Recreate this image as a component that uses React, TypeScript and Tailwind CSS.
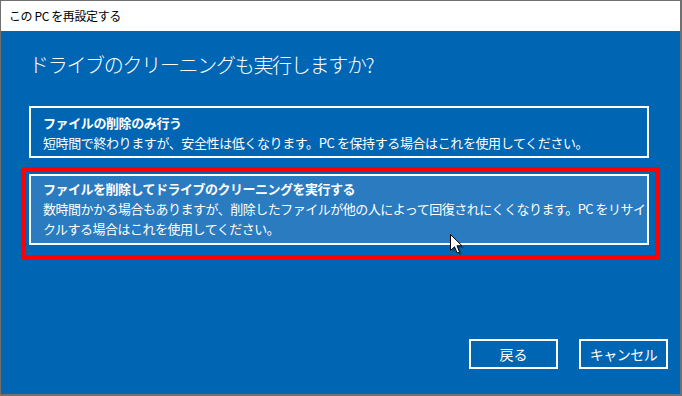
import React from "react";

const font = { fontFamily: '"Noto Sans CJK JP", "Noto Sans", sans-serif' };

export default function App() {
  return (
    <div
      className="relative w-[682px] h-[396px] flex flex-col border-t border-l border-r-2 border-b-2 border-[#707070] bg-[#0066b3] overflow-hidden"
      style={font}
    >
      {/* title bar */}
      <div className="h-[30px] bg-white flex items-center pl-[8px] text-[12px] tracking-[-0.4px] text-black">
        この PC を再設定する
      </div>

      {/* content */}
      <div className="flex-1 flex flex-col pl-[28px]">
        <div className="mt-[20px] h-[28px] leading-[28px] text-[20px] tracking-[-1.3px] text-white font-light">
          ドライブのクリーニングも実行しますか?
        </div>

        <div className="mt-[27px] w-[620px] border-2 border-white pl-[12px] pt-[5px] pb-[3px] text-white text-[13px] leading-[20px] tracking-[-0.4px]">
          <div className="font-bold">ファイルの削除のみ行う</div>
          <div>短時間で終わりますが、安全性は低くなります。PC を保持する場合はこれを使用してください。</div>
        </div>

        <div className="relative mt-[16px] w-[620px] border-2 border-white bg-[#2a7bc0] pl-[12px] pt-[3px] pb-[4px] text-white text-[13px] leading-[20px] tracking-[-0.5px]">
          <div className="font-bold">ファイルを削除してドライブのクリーニングを実行する</div>
          <div>
            数時間かかる場合もありますが、削除したファイルが他の人によって回復されにくくなります。PC をリサイ
            <br />
            クルする場合はこれを使用してください。
          </div>
          <div className="absolute left-[-10px] top-[-9px] w-[639px] h-[93px] border-[5px] border-[#ff0000] pointer-events-none" />
        </div>

        <div className="flex-1" />

        <div className="flex justify-end gap-[21px] pr-[12px] pb-[25px]">
          <div className="w-[89px] h-[30px] border-2 border-white flex items-center justify-center text-white text-[14px]">
            戻る
          </div>
          <div className="w-[89px] h-[30px] border-2 border-white flex items-center justify-center text-white text-[14px] tracking-[-0.5px]">
            キャンセル
          </div>
        </div>
      </div>

      {/* mouse cursor */}
      <svg
        className="absolute left-[448px] top-[232px]"
        width="16"
        height="24"
        viewBox="0 0 16 24"
      >
        <path
          d="M2.5 2.5 L2.5 18.5 L6.5 14.8 L9.2 21 L11.6 20 L9 13.8 L14 13.8 Z"
          fill="#1a2a40"
          opacity="0.5"
          transform="translate(1.2 1.2)"
        />
        <path
          d="M1.5 1.5 L1.5 17.5 L5.5 13.8 L8.2 20 L10.6 19 L8 12.8 L13 12.8 Z"
          fill="white"
          stroke="black"
          strokeWidth="1"
          strokeLinejoin="miter"
        />
      </svg>
    </div>
  );
}
